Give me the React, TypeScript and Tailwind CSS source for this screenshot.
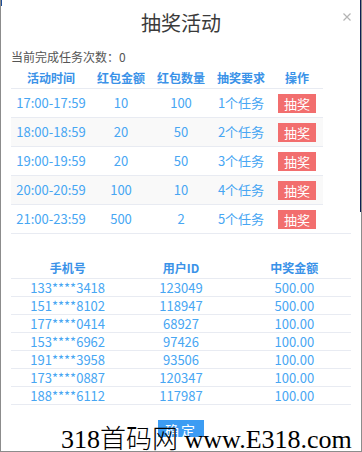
import React from 'react';

type Slot = { time: string; amount: number; count: number; tasks: number };
type Winner = { phone: string; uid: string; prize: string };

const slots: Slot[] = [
    { time: '17:00-17:59', amount: 10, count: 100, tasks: 1 },
    { time: '18:00-18:59', amount: 20, count: 50, tasks: 2 },
    { time: '19:00-19:59', amount: 20, count: 50, tasks: 3 },
    { time: '20:00-20:59', amount: 100, count: 10, tasks: 4 },
    { time: '21:00-23:59', amount: 500, count: 2, tasks: 5 },
];

const winners: Winner[] = [
    { phone: '133****3418', uid: '123049', prize: '500.00' },
    { phone: '151****8102', uid: '118947', prize: '500.00' },
    { phone: '177****0414', uid: '68927', prize: '100.00' },
    { phone: '153****6962', uid: '97426', prize: '100.00' },
    { phone: '191****3958', uid: '93506', prize: '100.00' },
    { phone: '173****0887', uid: '120347', prize: '100.00' },
    { phone: '188****6112', uid: '117987', prize: '100.00' },
];

const font = { fontFamily: '"Noto Sans CJK SC", "Noto Sans", sans-serif' };

export default function App() {
    return (
        <div
            className="relative w-[362px] h-[452px] overflow-hidden bg-white border-l border-r border-b border-[#8c8c8c]"
            style={font}
        >
            {/* page edge */}
            <div className="absolute top-0 right-0 w-px h-[212px] bg-[#0d1f52]" />
            <div className="absolute top-0 left-0 w-px h-[6px] bg-[#1d4f9a]" />

            <div className="h-[45px] flex items-center justify-center text-[20px] text-[#3a3a3a]">抽奖活动</div>
            <svg className="absolute left-[342px] top-[13px]" width="8" height="8" viewBox="0 0 8 8">
                <path d="M0.5 0.5 L7.5 7.5 M7.5 0.5 L0.5 7.5" stroke="#b4b4b4" strokeWidth="1.2" />
            </svg>

            <div className="h-[23px] leading-[23px] px-[10px] text-[12px] text-[#555]">当前完成任务次数：0</div>

            <div className="px-[10px]">
                <div className="w-[312px]">
                    <div className="flex h-[21px] items-center border-b border-[#e8ebf2] text-[12px] font-bold text-[#3a92e8]">
                        <div className="w-[80px] text-center">活动时间</div>
                        <div className="w-[60px] text-center">红包金额</div>
                        <div className="w-[60px] text-center">红包数量</div>
                        <div className="w-[60px] text-center">抽奖要求</div>
                        <div className="w-[52px] text-center">操作</div>
                    </div>
                    {slots.map((s, i) => (
                        <div
                            key={s.time}
                            className={`flex items-center text-[13px] text-[#47a6f3] ${i < slots.length - 1 ? 'h-[29px] border-b border-[#e8ebf2]' : 'h-[28px]'} ${i % 2 === 1 ? 'bg-[#f9f9f9]' : 'bg-white'}`}
                        >
                            <div className="w-[80px] text-center">{s.time}</div>
                            <div className="w-[60px] text-center">{s.amount}</div>
                            <div className="w-[60px] text-center">{s.count}</div>
                            <div className="w-[60px] text-center">{s.tasks}个任务</div>
                            <div className="w-[52px] flex justify-center">
                                <button className="w-[38px] h-[19px] bg-[#f26e6e] text-white text-[13px] leading-[19px]">抽奖</button>
                            </div>
                        </div>
                    ))}
                </div>
                <div className="h-px w-[340px] bg-[#e8ebf2]" />

                <div className="mt-[24px] w-[340px]">
                    <div className="flex h-[21px] items-center border-b border-[#e8ebf2] text-[12px] font-bold text-[#3a92e8]">
                        <div className="flex-1 text-center">手机号</div>
                        <div className="flex-1 text-center">用户ID</div>
                        <div className="flex-1 text-center">中奖金额</div>
                    </div>
                    {winners.map(w => (
                        <div key={w.phone} className="flex h-[18px] items-center border-b border-[#e8ebf2] text-[13px] text-[#47a6f3]">
                            <div className="flex-1 text-center">{w.phone}</div>
                            <div className="flex-1 text-center">{w.uid}</div>
                            <div className="flex-1 text-center">{w.prize}</div>
                        </div>
                    ))}
                </div>
            </div>

            <div className="mt-[15px] flex justify-center">
                <button className="w-[46px] h-[30px] bg-[#3c9cf3] text-white text-[14px] leading-[20px] pb-[10px] tracking-[2px]">确定</button>
            </div>

            {/* watermark */}
            <div className="absolute left-[55px] top-[437px] w-[305px] h-[14px] bg-white">
                <div
                    className="absolute left-[5px] top-[-10px] whitespace-nowrap text-[26px] leading-[26px] font-light text-black"
                    style={{ fontFamily: '"Liberation Serif", "Noto Sans CJK SC", serif' }}
                >
                    318首码网 www.E318.com
                </div>
            </div>
        </div>
    );
}
